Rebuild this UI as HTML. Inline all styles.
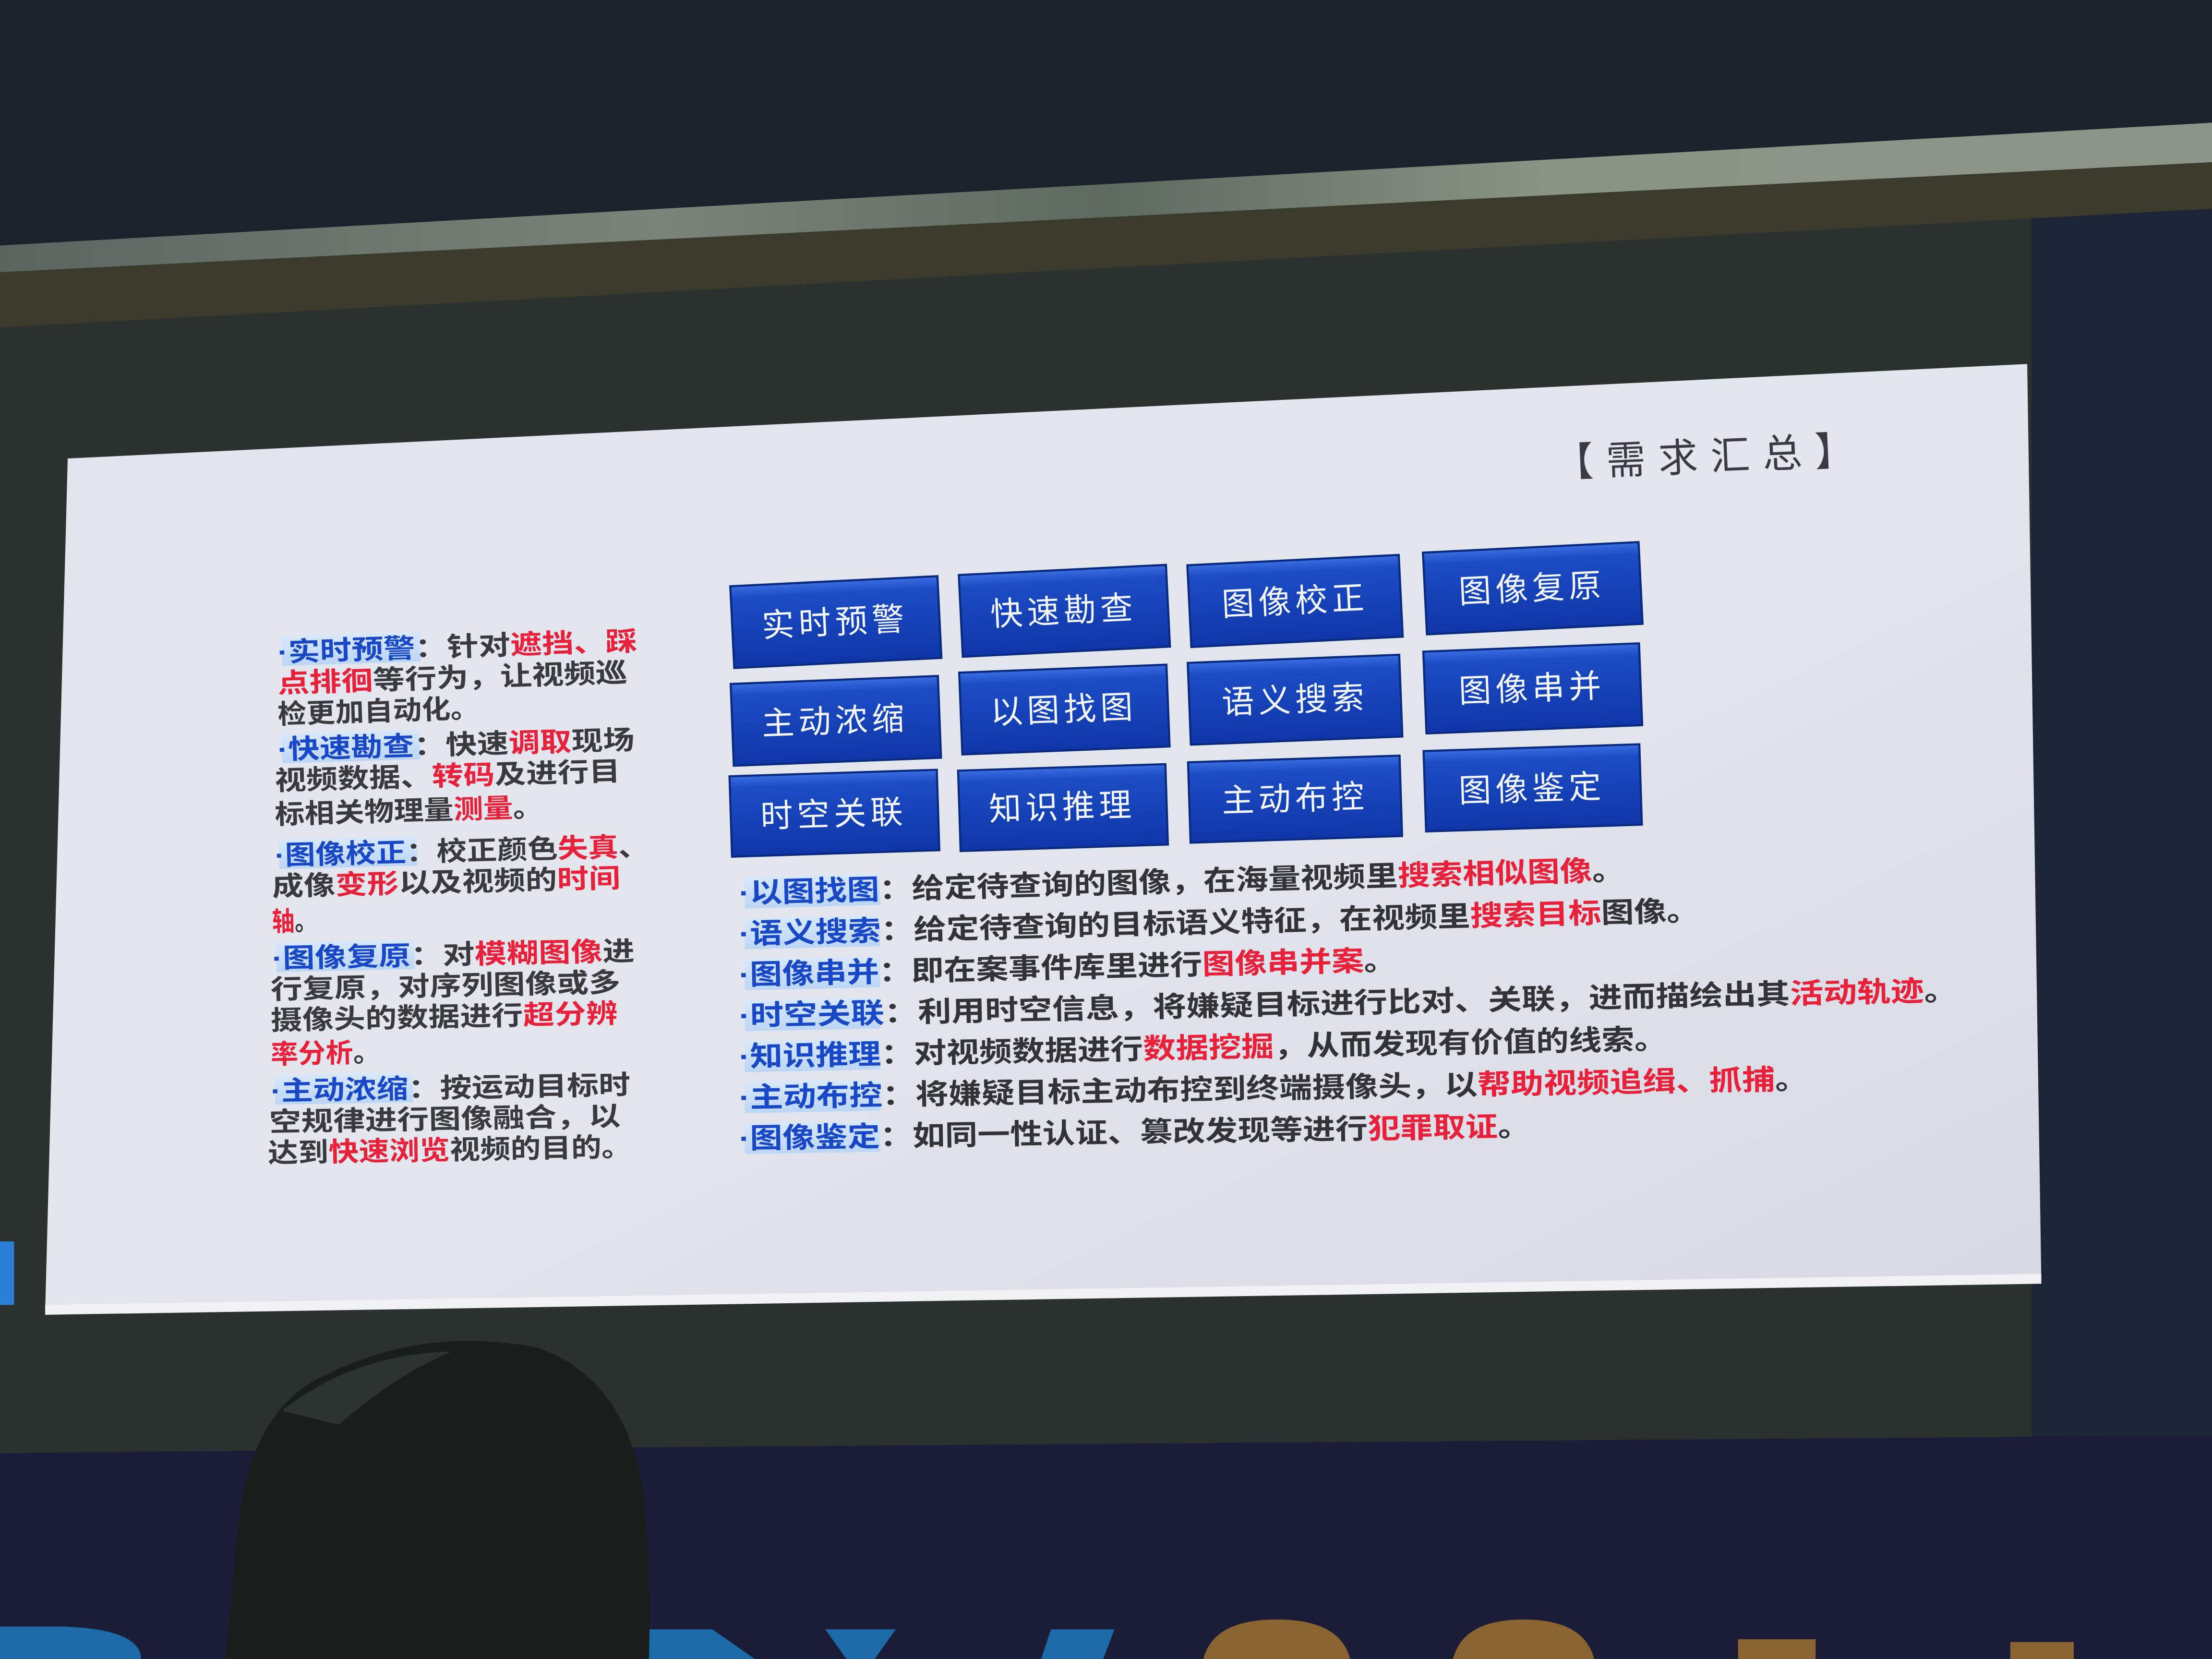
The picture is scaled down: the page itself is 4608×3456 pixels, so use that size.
<!DOCTYPE html>
<html><head><meta charset="utf-8"><style>
html,body{margin:0;padding:0;background:#18202c;width:4608px;height:3456px;overflow:hidden;}
svg{display:block}
text{font-family:"Liberation Sans","Noto Sans CJK SC","WenQuanYi Zen Hei",sans-serif;}
.l{font-size:19px;fill:#3a3a3e;font-weight:bold}
.r{font-size:20px;fill:#333337;font-weight:bold}
.b{fill:#1848c8}
.d{fill:#e8203a}
.bt{font-size:23px;fill:#f4f6ff;letter-spacing:3px}
</style></head><body>
<svg width="4608" height="3456" viewBox="0 0 1568 1176" preserveAspectRatio="none" xmlns="http://www.w3.org/2000/svg" style="overflow:hidden">
<defs>
<linearGradient id="top" x1="0" y1="0" x2="0" y2="1"><stop offset="0" stop-color="#1a222b"/><stop offset="1" stop-color="#16202e"/></linearGradient>
<linearGradient id="metal" x1="0" y1="0" x2="1" y2="0"><stop offset="0" stop-color="#5a6560"/><stop offset=".3" stop-color="#7a8478"/><stop offset=".5" stop-color="#5d6a60"/><stop offset=".7" stop-color="#8a9484"/><stop offset="1" stop-color="#8c9488"/></linearGradient>
<linearGradient id="slide" x1="0" y1="0" x2="1" y2="1"><stop offset="0" stop-color="#e2e5ee"/><stop offset=".5" stop-color="#e4e6ee"/><stop offset="1" stop-color="#d6d9e4"/></linearGradient>
<linearGradient id="btn" x1="0" y1="0" x2="0" y2="1"><stop offset="0" stop-color="#3a6ee0"/><stop offset=".15" stop-color="#1c4cc4"/><stop offset="1" stop-color="#0f36a8"/></linearGradient>
<linearGradient id="hl" x1="0" y1="0" x2="0" y2="1"><stop offset="0" stop-color="#d8e8fb"/><stop offset="1" stop-color="#bcd6f6"/></linearGradient>
</defs>
<rect width="1568" height="1176" fill="url(#top)"/>
<polygon points="0,230 1568,140 1568,1020 0,1030" fill="#2b312e"/>
<rect x="1440" y="140" width="128" height="900" fill="#1b2535"/>
<polygon points="0,174 1568,87 1568,115 0,193" fill="url(#metal)"/>
<polygon points="0,193 1568,115 1568,148 0,232" fill="#3b3b2c"/>
<polygon points="0,1030 450,1026 1500,1018 1568,1018 1568,1176 0,1176" fill="#1b1d38"/>
<path d="M0,1153 L45,1153 Q100,1155 100,1176 L0,1176Z" fill="#1d6aa8"/>
<path d="M455,1155 L505,1155 L535,1176 L460,1176Z" fill="#1d6aa8"/>
<path d="M585,1155 L635,1155 L620,1176 L600,1176Z M745,1155 L790,1155 L782,1176 L738,1176Z" fill="#1d6aa8"/>
<path d="M853,1176 Q860,1148 905,1148 Q950,1148 957,1176Z" fill="#8a6430"/>
<path d="M1030,1176 Q1037,1148 1080,1148 Q1123,1148 1130,1176Z" fill="#8a6430"/>
<rect x="1232" y="1162" width="55" height="14" fill="#8a6430"/>
<rect x="1425" y="1164" width="45" height="12" fill="#8a6430"/>
<polygon points="48,325 1437,258 1447,908 32,930" fill="url(#slide)"/>
<polygon points="32,925 1447,903 1447,910 32,932" fill="#f2f2f4"/>
<rect x="0" y="880" width="10" height="45" fill="#2a7fd8"/>
<path d="M160,1176 L168,1090 Q175,1000 230,975 Q300,940 380,955 Q440,975 455,1050 Q462,1110 460,1176Z" fill="#191d1c"/>
<path d="M200,1000 Q250,960 320,958 Q280,975 240,1010Z" fill="#2d3330"/>
<text x="1102" y="338" font-size="28" fill="#3a3a40" letter-spacing="9" transform="rotate(-2.4 1102 338)">【需求汇总】</text>
<g>
<g transform="rotate(-2.8 592 441)"><rect x="519" y="412" width="147" height="58" fill="url(#btn)" stroke="#0a2a80" stroke-width="1.5"/><text class="bt" x="592" y="449" text-anchor="middle">实时预警</text></g>
<g transform="rotate(-2.8 754 433)"><rect x="681" y="404" width="147" height="58" fill="url(#btn)" stroke="#0a2a80" stroke-width="1.5"/><text class="bt" x="754" y="441" text-anchor="middle">快速勘查</text></g>
<g transform="rotate(-2.8 918 426)"><rect x="843" y="397" width="150" height="58" fill="url(#btn)" stroke="#0a2a80" stroke-width="1.5"/><text class="bt" x="918" y="434" text-anchor="middle">图像校正</text></g>
<g transform="rotate(-2.8 1086 417)"><rect x="1010" y="388" width="153" height="58" fill="url(#btn)" stroke="#0a2a80" stroke-width="1.5"/><text class="bt" x="1086" y="425" text-anchor="middle">图像复原</text></g>
<g transform="rotate(-2.2 592 511)"><rect x="519" y="482" width="147" height="58" fill="url(#btn)" stroke="#0a2a80" stroke-width="1.5"/><text class="bt" x="592" y="519" text-anchor="middle">主动浓缩</text></g>
<g transform="rotate(-2.2 754 503)"><rect x="681" y="474" width="147" height="58" fill="url(#btn)" stroke="#0a2a80" stroke-width="1.5"/><text class="bt" x="754" y="511" text-anchor="middle">以图找图</text></g>
<g transform="rotate(-2.2 918 496)"><rect x="843" y="467" width="150" height="58" fill="url(#btn)" stroke="#0a2a80" stroke-width="1.5"/><text class="bt" x="918" y="504" text-anchor="middle">语义搜索</text></g>
<g transform="rotate(-2.2 1086 488)"><rect x="1010" y="459" width="153" height="58" fill="url(#btn)" stroke="#0a2a80" stroke-width="1.5"/><text class="bt" x="1086" y="496" text-anchor="middle">图像串并</text></g>
<g transform="rotate(-1.8 591 577)"><rect x="518" y="548" width="147" height="57" fill="url(#btn)" stroke="#0a2a80" stroke-width="1.5"/><text class="bt" x="591" y="585" text-anchor="middle">时空关联</text></g>
<g transform="rotate(-1.8 753 572)"><rect x="680" y="544" width="147" height="57" fill="url(#btn)" stroke="#0a2a80" stroke-width="1.5"/><text class="bt" x="753" y="580" text-anchor="middle">知识推理</text></g>
<g transform="rotate(-1.8 918 566)"><rect x="843" y="538" width="150" height="57" fill="url(#btn)" stroke="#0a2a80" stroke-width="1.5"/><text class="bt" x="918" y="574" text-anchor="middle">主动布控</text></g>
<g transform="rotate(-1.8 1086 559)"><rect x="1010" y="530" width="153" height="57" fill="url(#btn)" stroke="#0a2a80" stroke-width="1.5"/><text class="bt" x="1086" y="567" text-anchor="middle">图像鉴定</text></g>
</g>
<g fill="url(#hl)">
<rect x="200" y="451" width="98" height="21" transform="rotate(-1.8 200 469)"/>
<rect x="200" y="520" width="98" height="21" transform="rotate(-1.6 200 538)"/>
<rect x="198" y="595" width="98" height="21" transform="rotate(-1.4 198 613)"/>
<rect x="196" y="668" width="98" height="21" transform="rotate(-1.2 196 686)"/>
<rect x="195" y="762" width="98" height="21" transform="rotate(-1.0 195 780)"/>
</g>
<g class="l">
<text x="197" y="469" textLength="255" lengthAdjust="spacingAndGlyphs" transform="rotate(-1.8 197 469)"><tspan class="b">·实时预警</tspan>：针对<tspan class="d">遮挡、踩</tspan></text>
<text x="197" y="491" textLength="248" lengthAdjust="spacingAndGlyphs" transform="rotate(-1.8 197 491)"><tspan class="d">点排徊</tspan>等行为，让视频巡</text>
<text x="197" y="513" textLength="143" lengthAdjust="spacingAndGlyphs" transform="rotate(-1.8 197 513)">检更加自动化。</text>
<text x="197" y="538" textLength="253" lengthAdjust="spacingAndGlyphs" transform="rotate(-1.6 197 538)"><tspan class="b">·快速勘查</tspan>：快速<tspan class="d">调取</tspan>现场</text>
<text x="195" y="560" textLength="245" lengthAdjust="spacingAndGlyphs" transform="rotate(-1.6 195 560)">视频数据、<tspan class="d">转码</tspan>及进行目</text>
<text x="195" y="584" textLength="190" lengthAdjust="spacingAndGlyphs" transform="rotate(-1.6 195 584)">标相关物理量<tspan class="d">测量</tspan>。</text>
<text x="195" y="613" textLength="265" lengthAdjust="spacingAndGlyphs" transform="rotate(-1.4 195 613)"><tspan class="b">·图像校正</tspan>：校正颜色<tspan class="d">失真</tspan>、</text>
<text x="193" y="635" textLength="247" lengthAdjust="spacingAndGlyphs" transform="rotate(-1.4 193 635)">成像<tspan class="d">变形</tspan>以及视频的<tspan class="d">时间</tspan></text>
<text x="193" y="660" textLength="32" lengthAdjust="spacingAndGlyphs" transform="rotate(-1.4 193 660)"><tspan class="d">轴</tspan>。</text>
<text x="193" y="686" textLength="257" lengthAdjust="spacingAndGlyphs" transform="rotate(-1.2 193 686)"><tspan class="b">·图像复原</tspan>：对<tspan class="d">模糊图像</tspan>进</text>
<text x="192" y="708" textLength="248" lengthAdjust="spacingAndGlyphs" transform="rotate(-1.2 192 708)">行复原，对序列图像或多</text>
<text x="192" y="730" textLength="246" lengthAdjust="spacingAndGlyphs" transform="rotate(-1.2 192 730)">摄像头的数据进行<tspan class="d">超分辨</tspan></text>
<text x="192" y="754" textLength="78" lengthAdjust="spacingAndGlyphs" transform="rotate(-1.2 192 754)"><tspan class="d">率分析</tspan>。</text>
<text x="192" y="780" textLength="255" lengthAdjust="spacingAndGlyphs" transform="rotate(-1.0 192 780)"><tspan class="b">·主动浓缩</tspan>：按运动目标时</text>
<text x="191" y="802" textLength="249" lengthAdjust="spacingAndGlyphs" transform="rotate(-1.0 191 802)">空规律进行图像融合，以</text>
<text x="190" y="824" textLength="258" lengthAdjust="spacingAndGlyphs" transform="rotate(-1.0 190 824)">达到<tspan class="d">快速浏览</tspan>视频的目的。</text>
</g>
<g fill="url(#hl)">
<rect x="528" y="622" width="96" height="22" transform="rotate(-1.5 528 640)"/>
<rect x="528" y="651" width="96" height="22" transform="rotate(-1.4 528 669)"/>
<rect x="528" y="680" width="96" height="22" transform="rotate(-1.3 528 698)"/>
<rect x="528" y="709" width="96" height="22" transform="rotate(-1.2 528 727)"/>
<rect x="528" y="738" width="96" height="22" transform="rotate(-1.1 528 756)"/>
<rect x="528" y="767" width="96" height="22" transform="rotate(-1.0 528 785)"/>
<rect x="528" y="796" width="96" height="22" transform="rotate(-0.9 528 814)"/>
</g>
<g class="r">
<text x="524" y="640" textLength="628" lengthAdjust="spacingAndGlyphs" transform="rotate(-1.5 524 640)"><tspan class="b">·以图找图</tspan>：给定待查询的图像，在海量视频里<tspan class="d">搜索相似图像</tspan>。</text>
<text x="524" y="669" textLength="681" lengthAdjust="spacingAndGlyphs" transform="rotate(-1.4 524 669)"><tspan class="b">·语义搜索</tspan>：给定待查询的目标语义特征，在视频里<tspan class="d">搜索目标</tspan>图像。</text>
<text x="524" y="698" textLength="466" lengthAdjust="spacingAndGlyphs" transform="rotate(-1.3 524 698)"><tspan class="b">·图像串并</tspan>：即在案事件库里进行<tspan class="d">图像串并案</tspan>。</text>
<text x="524" y="727" textLength="864" lengthAdjust="spacingAndGlyphs" transform="rotate(-1.2 524 727)"><tspan class="b">·时空关联</tspan>：利用时空信息，将嫌疑目标进行比对、关联，进而描绘出其<tspan class="d">活动轨迹</tspan>。</text>
<text x="524" y="756" textLength="658" lengthAdjust="spacingAndGlyphs" transform="rotate(-1.1 524 756)"><tspan class="b">·知识推理</tspan>：对视频数据进行<tspan class="d">数据挖掘</tspan>，从而发现有价值的线索。</text>
<text x="524" y="785" textLength="758" lengthAdjust="spacingAndGlyphs" transform="rotate(-1.0 524 785)"><tspan class="b">·主动布控</tspan>：将嫌疑目标主动布控到终端摄像头，以<tspan class="d">帮助视频追缉、抓捕</tspan>。</text>
<text x="524" y="814" textLength="561" lengthAdjust="spacingAndGlyphs" transform="rotate(-0.9 524 814)"><tspan class="b">·图像鉴定</tspan>：如同一性认证、篡改发现等进行<tspan class="d">犯罪取证</tspan>。</text>
</g>
</svg>
</body></html>
